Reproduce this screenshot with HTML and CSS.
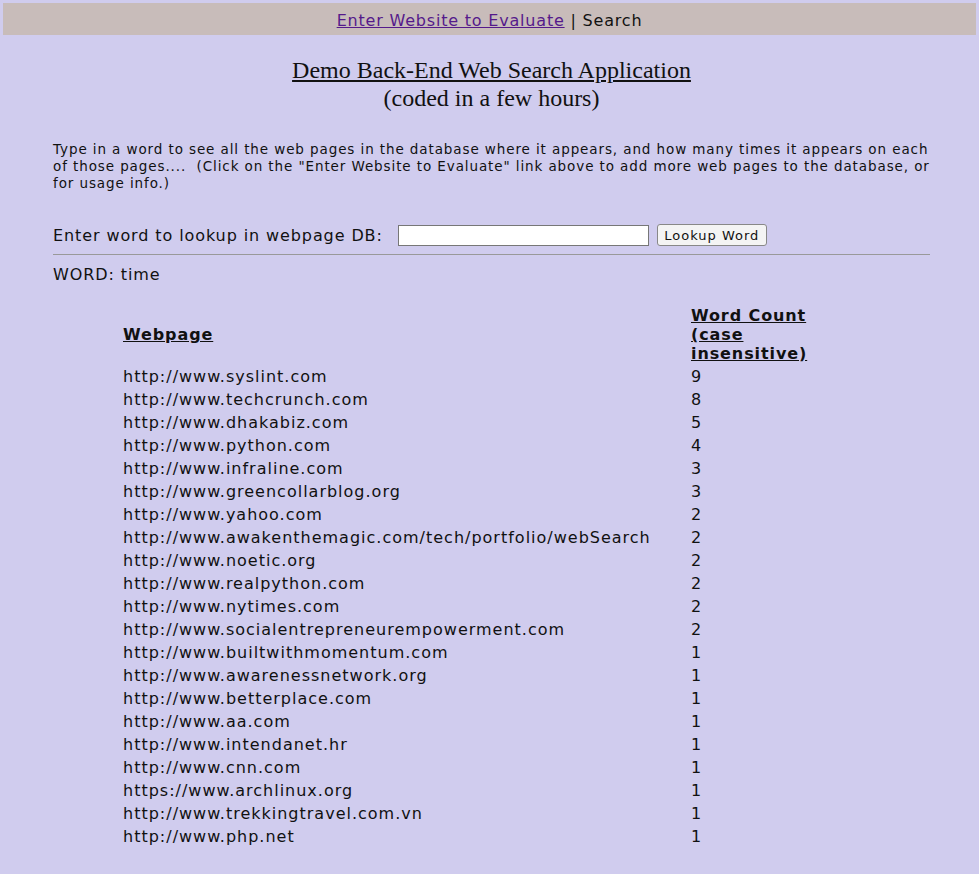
FILE: index.html
```html
<!DOCTYPE html>
<html>
<head>
<meta charset="utf-8">
<link rel="stylesheet" href="styles.css">
</head>
<body>
<div class="nav"><a href="#" class="navlink">Enter Website to Evaluate</a> | Search</div>
<div class="content">
  <h1 class="title"><span class="u">Demo Back-End Web Search Application</span><br>(coded in a few hours)</h1>
  <p class="intro">Type in a word to see all the web pages in the database where it appears, and how many times it appears on each of those pages....&nbsp; (Click on the "Enter Website to Evaluate" link above to add more web pages to the database, or for usage info.)</p>
  <form class="lookup">
    <label class="lbl">Enter word to lookup in webpage DB:</label>
    <input type="text" class="word">
    <button type="button" class="btn">Lookup Word</button>
  </form>
  <hr class="rule">
  <div class="wordline">WORD: time</div>
  <table class="results">
    <tr><th class="c1">Webpage</th><th class="c2">Word Count (case insensitive)</th></tr>
    <tr><td>http://www.syslint.com</td><td>9</td></tr>
    <tr><td>http://www.techcrunch.com</td><td>8</td></tr>
    <tr><td>http://www.dhakabiz.com</td><td>5</td></tr>
    <tr><td>http://www.python.com</td><td>4</td></tr>
    <tr><td>http://www.infraline.com</td><td>3</td></tr>
    <tr><td>http://www.greencollarblog.org</td><td>3</td></tr>
    <tr><td>http://www.yahoo.com</td><td>2</td></tr>
    <tr><td>http://www.awakenthemagic.com/tech/portfolio/webSearch</td><td>2</td></tr>
    <tr><td>http://www.noetic.org</td><td>2</td></tr>
    <tr><td>http://www.realpython.com</td><td>2</td></tr>
    <tr><td>http://www.nytimes.com</td><td>2</td></tr>
    <tr><td>http://www.socialentrepreneurempowerment.com</td><td>2</td></tr>
    <tr><td>http://www.builtwithmomentum.com</td><td>1</td></tr>
    <tr><td>http://www.awarenessnetwork.org</td><td>1</td></tr>
    <tr><td>http://www.betterplace.com</td><td>1</td></tr>
    <tr><td>http://www.aa.com</td><td>1</td></tr>
    <tr><td>http://www.intendanet.hr</td><td>1</td></tr>
    <tr><td>http://www.cnn.com</td><td>1</td></tr>
    <tr><td>https://www.archlinux.org</td><td>1</td></tr>
    <tr><td>http://www.trekkingtravel.com.vn</td><td>1</td></tr>
    <tr><td>http://www.php.net</td><td>1</td></tr>
  </table>
</div>
</body>
</html>
```

FILE: styles.css
```css
html, body {
  margin: 0;
  padding: 0;
  background: #d0ccee;
}
body {
  padding: 3px;
  font-family: "DejaVu Sans", Verdana, sans-serif;
  color: #111;
  font-size: 16px;
  letter-spacing: 0.9px;
}
.nav {
  background: #c8bcba;
  height: 32px;
  line-height: 35px;
  text-align: center;
  font-size: 16px;
  letter-spacing: 0.8px;
}
.navlink {
  color: #551a8b;
}
.content {
  padding: 0 46px 0 50px;
}
.title {
  margin: 21px 0 0;
  text-align: center;
  font-family: "Liberation Serif", serif;
  font-weight: normal;
  font-size: 24px;
  line-height: 28px;
  letter-spacing: 0;
}
.u { text-decoration: underline; }
.intro {
  margin: 29px 0 0;
  font-size: 13.5px;
  line-height: 17px;
  letter-spacing: 0.9px;
}
.lookup {
  margin: 32px 0 0;
  display: flex;
  align-items: center;
}
.lbl { margin-right: 15px; }
.word {
  width: 245px;
  height: 17px;
  border: 1px solid #777;
  margin: 0;
  padding: 1px 2px;
}
.btn {
  margin-left: 8px;
  font-family: "DejaVu Sans", sans-serif;
  font-size: 13px;
  letter-spacing: 1px;
  height: 22px;
  width: 110px;
  padding: 0 4px;
  background: #f4f4f4;
  border: 1px solid #888;
  border-radius: 3px;
  color: #111;
}
.rule {
  margin: 8px 0 0;
  border: 0;
  border-top: 1px solid #999;
  height: 0;
}
.wordline {
  margin-top: 10px;
  line-height: 19px;
}
.results {
  margin: 19px 0 0 67px;
  border-spacing: 2px;
  width: 694px;
  letter-spacing: 1px;
}
.results th, .results td {
  padding: 1px;
  text-align: left;
  line-height: 19px;
  font-size: 16px;
}
.results th {
  text-decoration: underline;
  font-weight: bold;
  letter-spacing: 0.9px;
}
.c2 { width: 120px; }
```
